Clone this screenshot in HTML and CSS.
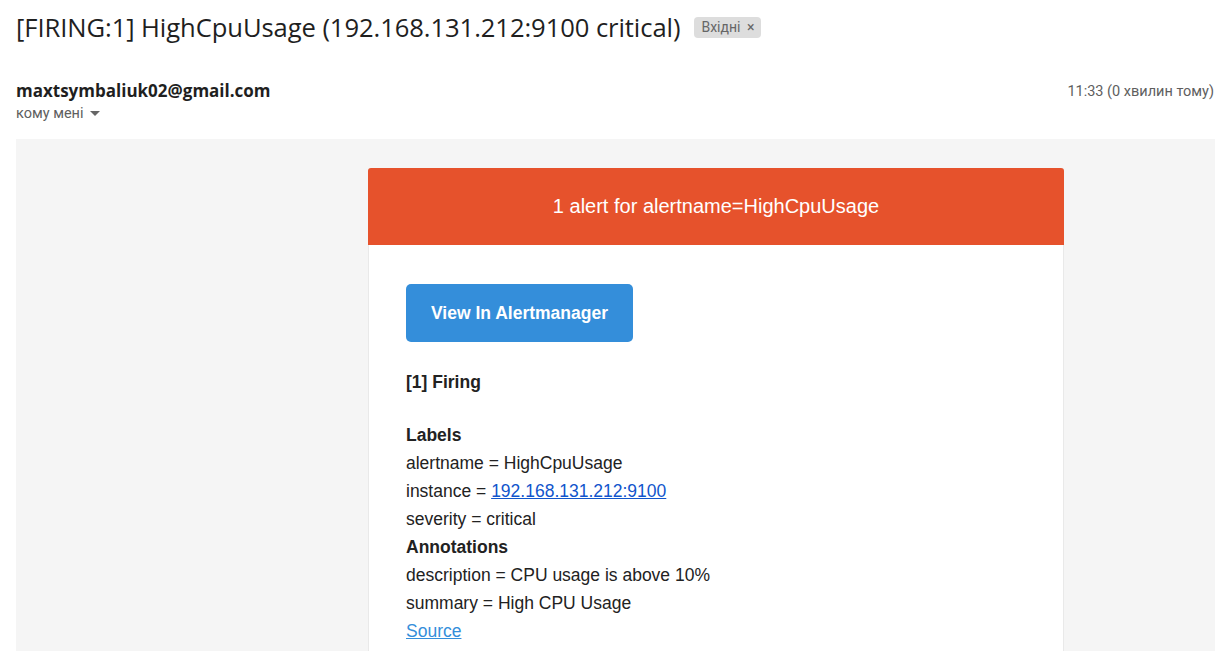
FILE: index.html
```html
<!DOCTYPE html>
<html>
<head>
<meta charset="utf-8">
<link rel="stylesheet" href="styles.css">
</head>
<body>
<div class="page">
  <div class="subject-row">
    <h1 class="subject">[FIRING:1] HighCpuUsage (192.168.131.212:9100 critical)</h1>
    <span class="badge">Вхідні <span class="badge-x">×</span></span>
  </div>
  <div class="sender-row">
    <div class="sender">
      <div class="from">maxtsymbaliuk02@gmail.com</div>
      <div class="to">кому мені <svg class="caret" width="10" height="6" viewBox="0 0 10 6"><path d="M0 0 L10 0 L5 5 Z" fill="#666"/></svg></div>
    </div>
    <div class="time">11:33 (0 хвилин тому)</div>
  </div>
  <div class="mail-bg">
    <div class="card">
      <div class="card-head">1 alert for alertname=HighCpuUsage</div>
      <div class="card-body">
        <a class="btn">View In Alertmanager</a>
        <div class="firing">[1] Firing</div>
        <div class="lines">
          <div class="strong">Labels</div>
          <div>alertname = HighCpuUsage</div>
          <div>instance = <a class="autolink">192.168.131.212:9100</a></div>
          <div>severity = critical</div>
          <div class="strong">Annotations</div>
          <div>description = CPU usage is above 10%</div>
          <div>summary = High CPU Usage</div>
          <div><a class="source">Source</a></div>
        </div>
      </div>
    </div>
  </div>
</div>
</body>
</html>
```
FILE: styles.css
```css
html, body {
  margin: 0;
  padding: 0;
  background: #fff;
  overflow: hidden;
}
.page {
  padding-left: 16px;
  font-family: "Roboto", "Liberation Sans", sans-serif;
}
.subject-row {
  display: flex;
  align-items: center;
  height: 54px;
  gap: 14px;
}
.subject {
  margin: 0;
  font-family: "Open Sans", "Roboto", sans-serif;
  font-weight: 400;
  font-size: 25.6px;
  color: #1f1f1f;
  letter-spacing: -0.08px;
}
.badge {
  background: #dddddd;
  color: #666;
  font-size: 14px;
  padding: 2px 7px;
  border-radius: 4px;
  line-height: 17px;
}
.badge-x {
  margin-left: 3px;
}
.sender-row {
  display: flex;
  justify-content: space-between;
  align-items: flex-start;
  margin-top: 26px;
}
.from {
  font-family: "Open Sans", sans-serif;
  font-weight: 700;
  font-size: 17px;
  color: #1f1f1f;
  line-height: 22px;
}
.to {
  font-size: 14.5px;
  color: #5e5e5e;
  margin-top: 3px;
  display: flex;
  align-items: center;
  gap: 6px;
}
.time {
  font-size: 14.5px;
  color: #5e5e5e;
  margin-top: 3px;
  padding-right: 1px;
}
.mail-bg {
  background: #f5f5f5;
  margin-top: 17px;
  height: 512px;
  padding-top: 29px;
  box-sizing: border-box;
  overflow: hidden;
}
.card {
  width: 696px;
  margin-left: 352px;
  background: #fff;
  border: 1px solid #e9e9e9;
  border-bottom: none;
  border-radius: 3px 3px 0 0;
  box-sizing: border-box;
  font-family: "Liberation Sans", Arial, sans-serif;
  height: 100%;
}
.card-head {
  background: #e6522c;
  color: #fff;
  font-size: 20px;
  text-align: center;
  height: 77px;
  line-height: 77px;
  border-radius: 3px 3px 0 0;
  margin: -1px -1px 0 -1px;
}
.card-body {
  padding: 39px 37px 0;
  color: #222;
  font-size: 17.5px;
}
.btn {
  display: inline-block;
  background: #348eda;
  color: #fff;
  font-weight: 700;
  font-size: 17.5px;
  width: 227px;
  height: 58px;
  line-height: 58px;
  text-align: center;
  border-radius: 5px;
}
.firing {
  font-weight: 700;
  margin-top: 30px;
  line-height: 20px;
}
.lines {
  margin-top: 29px;
  line-height: 28px;
}
.strong {
  font-weight: 700;
}
.autolink {
  color: #1155cc;
  text-decoration: underline;
}
.source {
  color: #348eda;
  text-decoration: underline;
}
```
